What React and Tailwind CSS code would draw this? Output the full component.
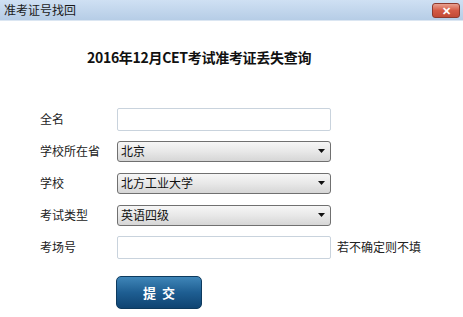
const font = { fontFamily: '"Noto Sans CJK SC", "Liberation Sans", sans-serif' };

function Caret() {
  return (
    <svg width="7" height="4" viewBox="0 0 7 4" className="shrink-0">
      <path d="M0 0h7L3.5 4z" fill="#111" />
    </svg>
  );
}

function Select({ value }) {
  return (
    <div className="w-[214px] h-[21px] flex items-center justify-between pl-[3px] pr-[5px] rounded-[3px] border border-[#707070] bg-gradient-to-b from-[#f6f6f6] via-[#e8e8e8] to-[#d6d6d6] text-[12px] text-[#111]">
      <span>{value}</span>
      <Caret />
    </div>
  );
}

function Input() {
  return <div className="w-[214px] h-[23px] border border-[#c9d3dd] rounded-[2px] bg-white" />;
}

function Row({ label, children }) {
  return (
    <div className="flex items-center h-[32px]">
      <div className="w-[77px] text-[12px] text-[#222]">{label}</div>
      {children}
    </div>
  );
}

export default function App() {
  return (
    <div className="w-[463px] h-[317px] bg-white overflow-hidden" style={font}>
      <div className="h-[21px] flex items-center justify-between pl-[4px] pr-[3px] bg-gradient-to-b from-[#cfe0f3] to-[#b6cde6] border-b border-[#dbe6f2]">
        <span className="text-[12px] text-[#1a1a1a] leading-none">准考证号找回</span>
        <div className="w-[28px] h-[15px] rounded-[3px] border border-[#8e3a2e] bg-gradient-to-b from-[#e8a090] via-[#d45a45] to-[#c24a36] flex items-center justify-center">
          <span className="text-white text-[11px] font-bold leading-none">✕</span>
        </div>
      </div>
      <div className="pl-[87px] pt-[29px] text-[14px] font-bold text-[#111] leading-none tracking-[-0.3px]">
        2016年12月CET考试准考证丢失查询
      </div>
      <div className="pl-[40px] pt-[39px] flex flex-col">
        <Row label="全名"><Input /></Row>
        <Row label="学校所在省"><Select value="北京" /></Row>
        <Row label="学校"><Select value="北方工业大学" /></Row>
        <Row label="考试类型"><Select value="英语四级" /></Row>
        <Row label="考场号">
          <Input />
          <span className="ml-[6px] text-[12px] text-[#222]">若不确定则不填</span>
        </Row>
      </div>
      <div className="pl-[116px] pt-[13px]">
        <button className="w-[86px] h-[33px] rounded-[5px] border border-[#0d3a5e] bg-gradient-to-b from-[#3f86b8] via-[#1e5e92] to-[#0f4472] text-white text-[13px] tracking-[6px] pl-[6px] font-bold">
          提交
        </button>
      </div>
    </div>
  );
}
